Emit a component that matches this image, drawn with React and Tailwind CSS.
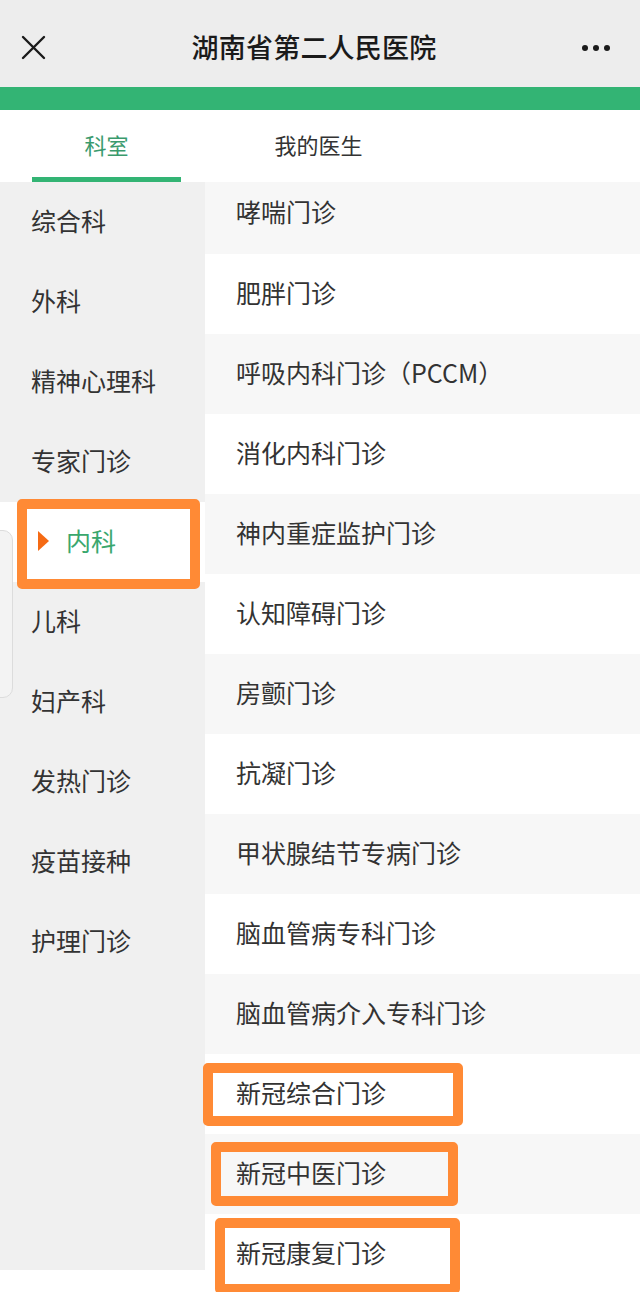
import React from 'react'

const DEPTS = ['综合科', '外科', '精神心理科', '专家门诊', '内科', '儿科', '妇产科', '发热门诊', '疫苗接种', '护理门诊']

const CLINICS = [
  '哮喘门诊',
  '肥胖门诊',
  '呼吸内科门诊（PCCM）',
  '消化内科门诊',
  '神内重症监护门诊',
  '认知障碍门诊',
  '房颤门诊',
  '抗凝门诊',
  '甲状腺结节专病门诊',
  '脑血管病专科门诊',
  '脑血管病介入专科门诊',
  '新冠综合门诊',
  '新冠中医门诊',
  '新冠康复门诊',
]

const font = { fontFamily: '"Noto Sans CJK SC", "Noto Sans", sans-serif' }

function Header() {
  return (
    <div className="h-[87px] bg-[#ededed] flex items-center justify-between pl-[20px] pr-[20px] pt-[8px]">
      <svg className="w-[26px] h-[26px]" viewBox="0 0 26 26" fill="none" stroke="#1a1a1a" strokeWidth="2.4" strokeLinecap="round">
        <path d="M3 2l21 21M24 2L3 23" />
      </svg>
      <h1 className="text-[27px] font-medium text-[#1a1a1a] tracking-[0.2px]">湖南省第二人民医院</h1>
      <div className="flex items-center gap-[5px] pr-[10px]">
        <span className="w-[6px] h-[6px] rounded-full bg-[#1a1a1a]" />
        <span className="w-[6px] h-[6px] rounded-full bg-[#1a1a1a]" />
        <span className="w-[6px] h-[6px] rounded-full bg-[#1a1a1a]" />
      </div>
    </div>
  )
}

function Tabs() {
  return (
    <div className="h-[72px] bg-white flex">
      <div className="relative w-[149px] ml-[32px] flex items-center justify-center pb-[4px]">
        <span className="text-[22px] text-[#3a9a6d]">科室</span>
        <span className="absolute left-0 right-0 bottom-0 h-[5px] bg-[#33b474]" />
      </div>
      <div className="w-[149px] ml-[63px] flex items-center justify-center pb-[4px]">
        <span className="text-[22px] text-[#333]">我的医生</span>
      </div>
    </div>
  )
}

function Sidebar() {
  return (
    <div className="w-[205px] shrink-0">
      <div className="h-[1088px] bg-[#f0f0f0]">
        {DEPTS.map((d) => {
          const active = d === '内科'
          return (
            <div
              key={d}
              className={
                'h-[80px] flex items-center text-[25px] pb-[2px] ' +
                (active ? 'bg-white text-[#3aa76d] pl-[38px]' : 'text-[#333] pl-[31px]')
              }
            >
              {active && (
                <span className="w-0 h-0 border-y-[10px] border-y-transparent border-l-[11px] border-l-[#f56a14] mr-[17px]" />
              )}
              {d}
            </div>
          )
        })}
      </div>
    </div>
  )
}

function ClinicList() {
  return (
    <div className="flex-1">
      {CLINICS.map((c, i) => (
        <div
          key={c}
          className={
            'flex items-center pl-[31px] text-[25px] text-[#333] ' +
            (i === 0 ? 'h-[72px] pb-[12px] ' : 'h-[80px] pb-[2px] ') +
            (i % 2 === 0 ? 'bg-[#f7f7f7]' : 'bg-white')
          }
        >
          {c}
        </div>
      ))}
    </div>
  )
}

export default function App() {
  return (
    <div className="relative w-[640px] h-[1292px] overflow-hidden bg-white" style={font}>
      <Header />
      <div className="h-[23px] bg-[#33b474]" />
      <Tabs />
      <div className="flex">
        <Sidebar />
        <ClinicList />
      </div>

      {/* floating side handle */}
      <div className="absolute left-[-10px] top-[530px] w-[23px] h-[168px] rounded-r-[10px] border border-[#dcdcdc] bg-[#f3f3f3]" />

      {/* annotation boxes */}
      <div className="absolute left-[17px] top-[499px] w-[183px] h-[90px] border-[10px] border-[#ff8a35] rounded-[5px]" />
      <div className="absolute left-[203px] top-[1063px] w-[260px] h-[63px] border-[10px] border-[#ff8a35] rounded-[5px]" />
      <div className="absolute left-[211px] top-[1142px] w-[247px] h-[64px] border-[10px] border-[#ff8a35] rounded-[5px]" />
      <div className="absolute left-[215px] top-[1218px] w-[245px] h-[76px] border-[10px] border-[#ff8a35] rounded-[5px]" />
    </div>
  )
}
